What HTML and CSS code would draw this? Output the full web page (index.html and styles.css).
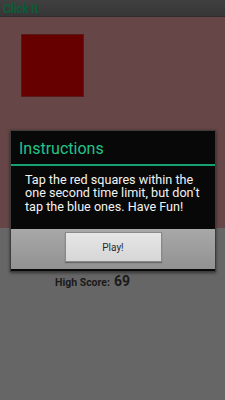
FILE: index.html
```html
<!DOCTYPE html>
<html>
<head>
    <title>Click It</title>
    <link rel="stylesheet" href="styles.css">
</head>
<body>
    <div class="screen">
        <div class="actionbar">Click It</div>
        <div class="board">
            <div class="square"></div>
        </div>
        <div class="score">
            <span class="label">High Score:</span>
            <span class="value">69</span>
        </div>

        <div class="dialog">
            <div class="dialog-title">Instructions</div>
            <div class="dialog-body">
                Tap the red squares within the one second time limit, but don’t tap the blue ones. Have Fun!
            </div>
            <div class="dialog-buttons">
                <button class="play">Play!</button>
            </div>
        </div>
    </div>
</body>
</html>
```

FILE: styles.css
```css
* {
    margin: 0;
    padding: 0;
    box-sizing: border-box;
}

body {
    background: #666666;
    font-family: "Roboto", sans-serif;
}

.screen {
    position: relative;
    width: 225px;
    height: 400px;
    background: #666666;
}

.actionbar {
    height: 17px;
    background: linear-gradient(#404040, #363636);
    border-bottom: 1px solid #2e2e2e;
    color: #0d5c38;
    font-weight: bold;
    font-size: 12.5px;
    line-height: 17px;
    letter-spacing: -0.5px;
    padding-left: 3px;
}

.board {
    height: 211px;
    background: #664646;
    padding: 17px 0 0 21px;
}

.square {
    width: 63px;
    height: 63px;
    background: #660000;
    border: 1px solid #5a1a1a;
}

.score {
    display: flex;
    align-items: baseline;
    padding: 45px 0 0 55px;
    color: #1a1a1a;
    font-weight: bold;
}

.score .label {
    font-size: 10.5px;
    margin-right: 4px;
}

.score .value {
    font-size: 14px;
}

.dialog {
    position: absolute;
    left: 10px;
    top: 130px;
    width: 206px;
    height: 142px;
    border: 1px solid #3c3c3c;
    background: #080808;
    box-shadow: 0 1px 3px rgba(0, 0, 0, 0.5);
}

.dialog-title {
    height: 35px;
    color: #22c48a;
    font-size: 16px;
    line-height: 36px;
    padding-left: 8px;
    border-bottom: 2px solid #16a070;
}

.dialog-body {
    height: 63px;
    color: #f2f2f2;
    font-size: 12.6px;
    line-height: 13.3px;
    padding: 7px 8px 0 14px;
}

.dialog-buttons {
    height: 40px;
    background: linear-gradient(#a8a8a8, #929292);
    display: flex;
    justify-content: center;
    padding-top: 3px;
}

.play {
    width: 97px;
    height: 30px;
    border: 1px solid #8a8a8a;
    background: linear-gradient(#e6e6e6, #d6d6d6);
    box-shadow: 0 1px 1px rgba(0, 0, 0, 0.3);
    color: #2a2a2a;
    font-family: "Roboto", sans-serif;
    font-size: 10px;
}
```
